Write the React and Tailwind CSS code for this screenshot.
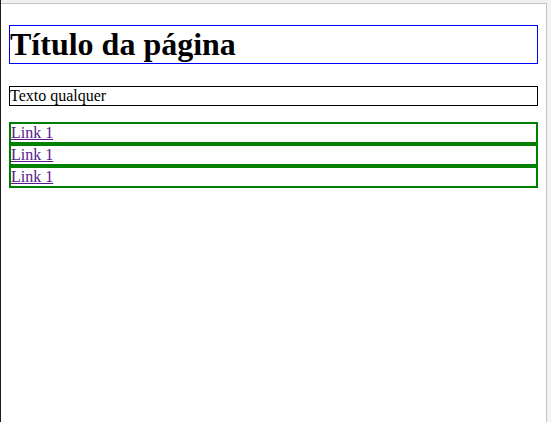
export default function App() {
  const links = ["Link 1", "Link 1", "Link 1"];

  return (
    <div className="flex w-[551px] h-[422px] bg-[#f3f3f3] overflow-hidden">
      {/* left edge */}
      <div className="w-[1px] h-full bg-[#1b1b1b]" />

      <div className="flex flex-col">
        <div className="h-[3px] bg-[#f0f0f0]" />

        {/* framed page */}
        <div
          className="w-[546px] h-[419px] bg-white border-t border-r border-[#c4c4c4] px-[8px] pt-[21.44px] text-black"
          style={{ fontFamily: '"Liberation Serif", "Times New Roman", serif' }}
        >
          <h1 className="text-[32px] font-bold leading-[normal] border border-[#0000ff] mb-[21.44px]">
            Título da página
          </h1>

          <p className="text-[16px] leading-[normal] border border-black mb-[16px]">
            Texto qualquer
          </p>

          {links.map((label, i) => (
            <div key={i} className="border-2 border-[#008000] text-[16px] leading-[normal]">
              <a href="#" className="underline text-[#551a8b]">
                {label}
              </a>
            </div>
          ))}
        </div>
      </div>
    </div>
  );
}
